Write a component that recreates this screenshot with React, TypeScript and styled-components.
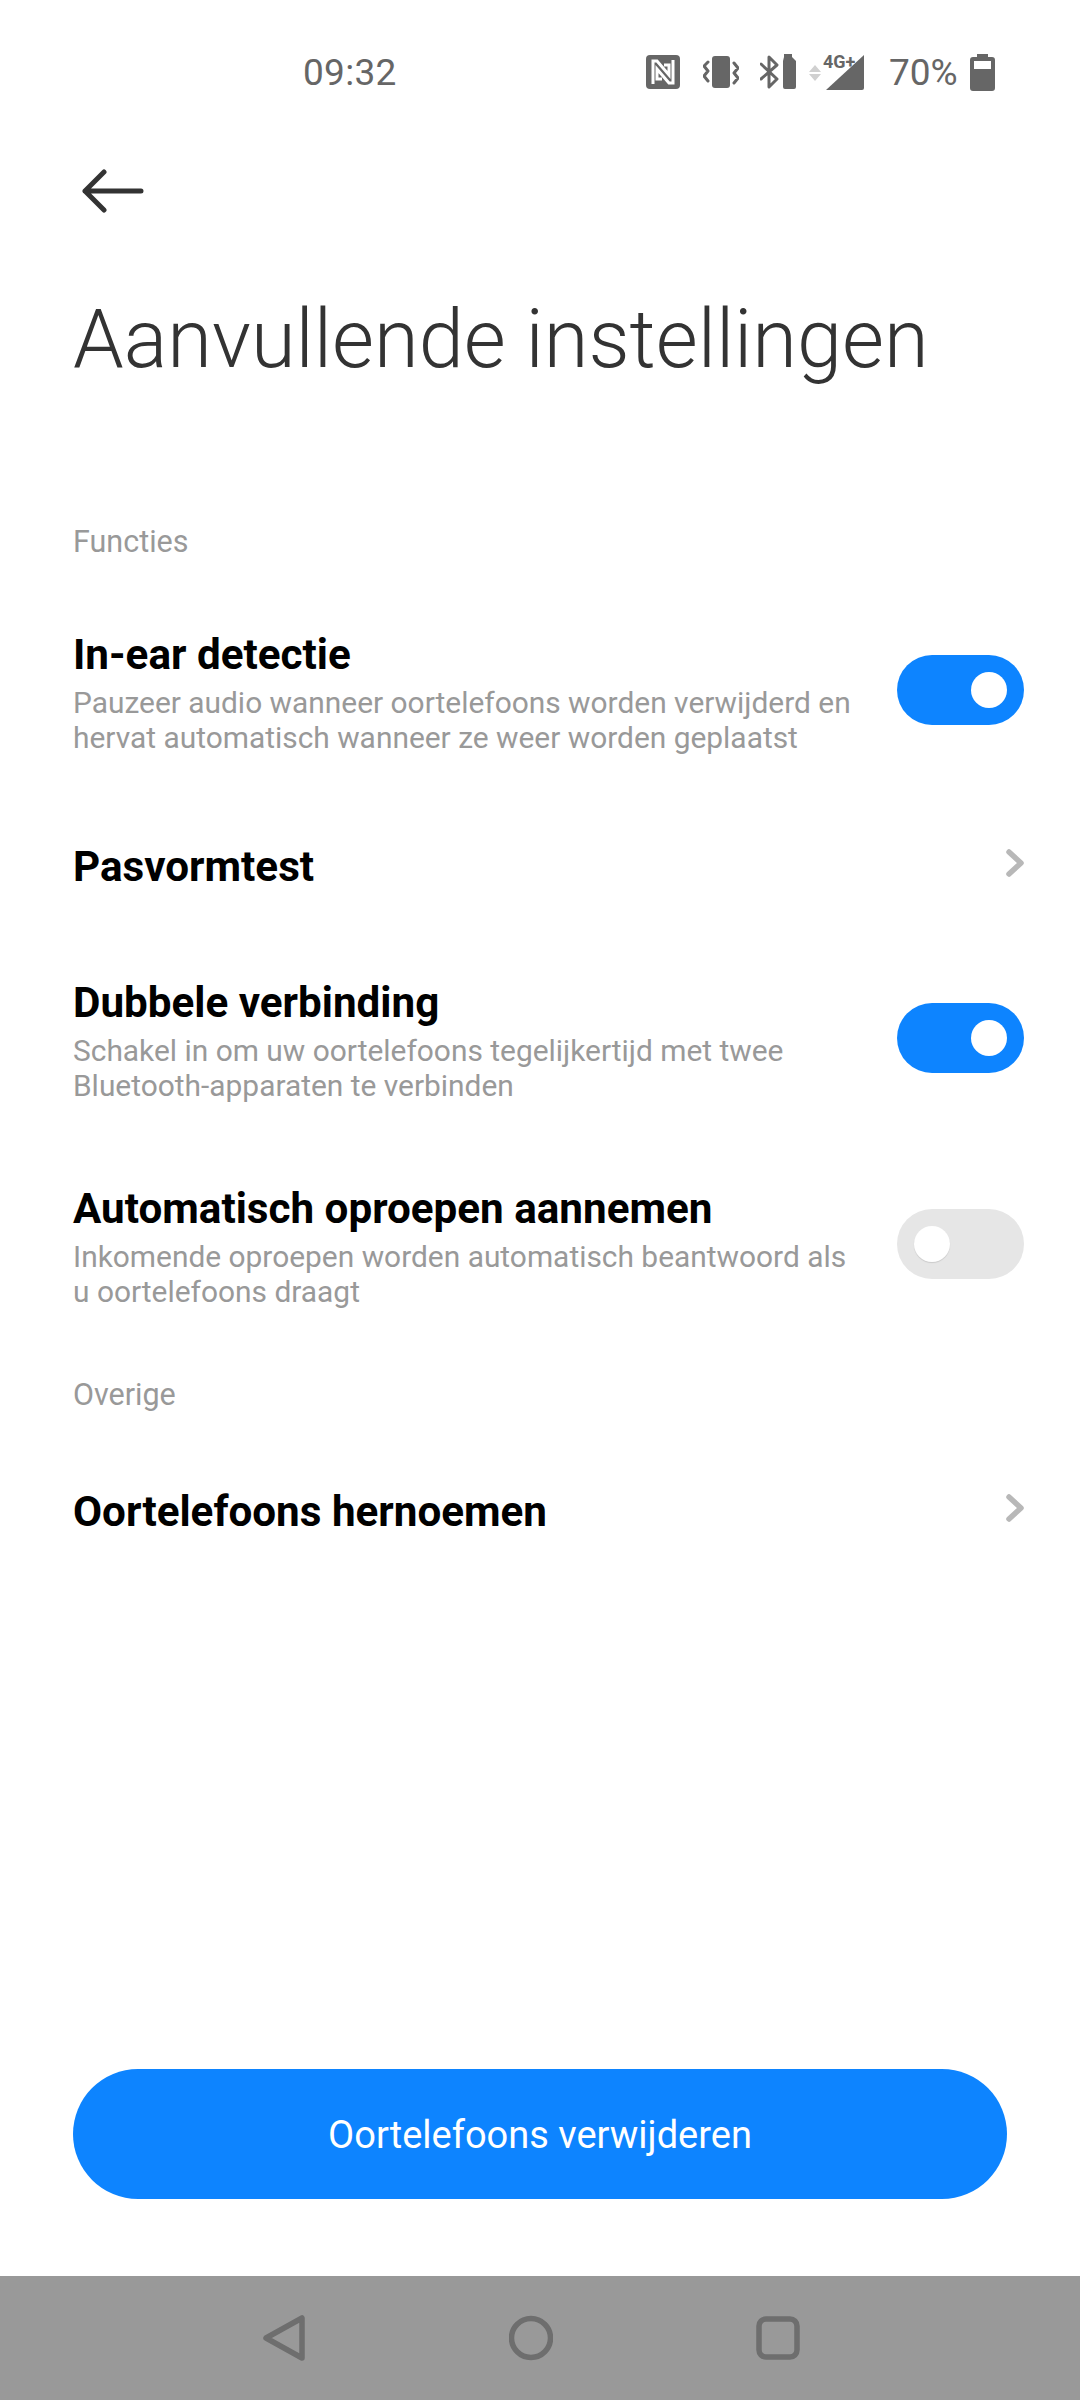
import React from "react";
import styled, { createGlobalStyle } from "styled-components";

const Global = createGlobalStyle`
  html, body { margin: 0; padding: 0; background: #fff; }
  body { font-family: Roboto, "Liberation Sans", sans-serif; }
`;

const Page = styled.div`
  width: 1080px;
  height: 2400px;
  display: flex;
  flex-direction: column;
  background: #fff;
  overflow: hidden;
`;

const StatusBar = styled.div`
  height: 144px;
  flex: none;
  display: flex;
  align-items: center;
  padding: 0 0 0 303px;
  box-sizing: border-box;
  color: #666;
  font-size: 37px;
`;

const Time = styled.span`
  width: 343px;
  letter-spacing: 0.3px;
`;

const StatusIcon = styled.svg<{ $ml?: number }>`
  display: block;
  flex: none;
  margin-left: ${(p) => p.$ml ?? 0}px;
`;

const Percent = styled.span`
  margin-left: 25px;
  font-size: 37px;
`;

const BackRow = styled.div`
  height: 64px;
  flex: none;
  margin-top: 25px;
  padding: 0 0 0 82px;
`;

const Title = styled.h1`
  margin: 57px 0 0;
  padding-left: 73px;
  font-size: 81.2px;
  line-height: 100px;
  font-weight: 300;
  color: #333;
`;

const Section = styled.div<{ $mt: number; $mb: number }>`
  margin: ${(p) => p.$mt}px 0 ${(p) => p.$mb}px 73px;
  font-size: 30.5px;
  line-height: 36px;
  color: #999;
`;

const Row = styled.div`
  display: flex;
  align-items: center;
  justify-content: space-between;
  padding: 44px 56px 38px 73px;
`;

const LinkRow = styled.div`
  display: flex;
  align-items: center;
  justify-content: space-between;
  height: 142px;
  padding: 6px 56px 0 73px;
  box-sizing: border-box;
`;

const RowText = styled.div`
  width: 800px;
`;

const RowTitle = styled.div`
  font-size: 42.2px;
  line-height: 48px;
  font-weight: 700;
  color: #000;
`;

const RowSub = styled.div`
  margin-top: 6px;
  font-size: 29.9px;
  line-height: 35px;
  color: #999;
  white-space: pre-line;
`;

const Toggle = styled.div<{ $on: boolean }>`
  width: 127px;
  height: 70px;
  flex: none;
  margin-top: -7px;
  border-radius: 35px;
  background: ${(p) => (p.$on ? "#0d84ff" : "#e6e6e6")};
  display: flex;
  align-items: center;
  justify-content: ${(p) => (p.$on ? "flex-end" : "flex-start")};
  padding: 0 17px;
  box-sizing: border-box;
`;

const Knob = styled.div<{ $shadow: boolean }>`
  width: 36px;
  height: 36px;
  border-radius: 50%;
  background: #fff;
  box-shadow: ${(p) => (p.$shadow ? "0 1px 1px rgba(0,0,0,.12)" : "none")};
`;

const Chevron = styled.svg`
  display: block;
  flex: none;
  margin-top: -8px;
`;

const Spacer = styled.div`
  flex: 1;
`;

const MainButton = styled.div`
  margin: 0 73px 77px;
  height: 130px;
  padding-top: 1px;
  box-sizing: border-box;
  border-radius: 65px;
  background: #0d84ff;
  color: #fff;
  font-size: 38px;
  display: flex;
  align-items: center;
  justify-content: center;
`;

const NavBar = styled.div`
  height: 124px;
  flex: none;
  background: #999;
  display: flex;
  align-items: center;
  padding: 0 0 0 263px;
  gap: 203px;
`;

const ChevronIcon = () => (
  <Chevron width="18" height="28" viewBox="0 0 18 28">
    <path d="M3 3 L15 14 L3 25" fill="none" stroke="#b8b8b8" strokeWidth="5.5" strokeLinecap="round" strokeLinejoin="round" />
  </Chevron>
);

const Switch = ({ on }: { on: boolean }) => (
  <Toggle $on={on}>
    <Knob $shadow={!on} />
  </Toggle>
);

const Item = ({ title, sub, on }: { title: string; sub: string; on: boolean }) => (
  <Row>
    <RowText>
      <RowTitle>{title}</RowTitle>
      <RowSub>{sub}</RowSub>
    </RowText>
    <Switch on={on} />
  </Row>
);

export default function App() {
  return (
    <Page>
      <Global />
      <StatusBar>
        <Time>09:32</Time>
        <StatusIcon width="34" height="34" viewBox="0 0 34 34">
          <rect width="34" height="34" rx="4" fill="#666" />
          <path d="M7 29 V6 H11 L23 20 V10 H18 M27 5 V28 H23 L11 14 V24 H16" fill="none" stroke="#fff" strokeWidth="3" />
        </StatusIcon>
        <StatusIcon $ml={23} width="36" height="34" viewBox="0 0 36 34">
          <rect x="9" y="1" width="18" height="32" rx="3" fill="#666" />
          <path d="M5 7 L1 11 L5 16 L1 21 L5 26 M31 8 L35 13 L31 18 L35 23 L31 28" fill="none" stroke="#666" strokeWidth="3" strokeLinejoin="round" strokeLinecap="round" />
        </StatusIcon>
        <StatusIcon $ml={21} width="36" height="36" viewBox="0 0 36 36">
          <path d="M1 10 L17 25 L9 33 V3 L17 11 L1 25" fill="none" stroke="#666" strokeWidth="3" strokeLinejoin="round" strokeLinecap="round" />
          <path d="M24 0 H32 V3 L36 7 V33 Q36 35 34 35 H25 Q23 35 23 33 V7 L24 3 Z" fill="#666" />
        </StatusIcon>
        <StatusIcon $ml={12} width="56" height="44" viewBox="0 -3 56 44">
          <path d="M1 19 L7 12 L13 19 Z M1 21 H13 L7 28 Z" fill="#d0d0d0" />
          <path d="M18 37 L56 2 V35 Q56 37 54 37 Z" fill="#666" />
          <text x="15" y="15" fontFamily="Roboto, sans-serif" fontSize="18" fontWeight="700" fill="#666">4G+</text>
        </StatusIcon>
        <Percent>70%</Percent>
        <StatusIcon $ml={12} width="25" height="37" viewBox="0 0 25 37">
          <path fillRule="evenodd" d="M7 0 H18 V3 H22 Q25 3 25 6 V34 Q25 37 22 37 H3 Q0 37 0 34 V6 Q0 3 3 3 H7 Z M4 7 V15 H21 V7 Z" fill="#666" />
        </StatusIcon>
      </StatusBar>
      <BackRow>
        <svg width="62" height="44" viewBox="0 0 62 44">
          <path d="M3 22 H59 M22 3 L3 22 L22 41" fill="none" stroke="#333" strokeWidth="5" strokeLinecap="round" strokeLinejoin="round" />
        </svg>
      </BackRow>
      <Title>Aanvullende instellingen</Title>
      <Section $mt={134} $mb={27}>Functies</Section>
      <Item
        title="In-ear detectie"
        sub={"Pauzeer audio wanneer oortelefoons worden verwijderd en\nhervat automatisch wanneer ze weer worden geplaatst"}
        on
      />
      <LinkRow>
        <RowTitle>Pasvormtest</RowTitle>
        <ChevronIcon />
      </LinkRow>
      <Item
        title="Dubbele verbinding"
        sub={"Schakel in om uw oortelefoons tegelijkertijd met twee\nBluetooth-apparaten te verbinden"}
        on
      />
      <Item
        title="Automatisch oproepen aannemen"
        sub={"Inkomende oproepen worden automatisch beantwoord als\nu oortelefoons draagt"}
        on={false}
      />
      <Section $mt={30} $mb={25}>Overige</Section>
      <LinkRow>
        <RowTitle>Oortelefoons hernoemen</RowTitle>
        <ChevronIcon />
      </LinkRow>
      <Spacer />
      <MainButton>Oortelefoons verwijderen</MainButton>
      <NavBar>
        <svg width="43" height="46" viewBox="0 0 43 46">
          <path d="M3 23 L39 3 V43 Z" fill="none" stroke="#6e6e6e" strokeWidth="5.5" strokeLinejoin="round" />
        </svg>
        <svg width="44" height="46" viewBox="0 0 44 46">
          <circle cx="22" cy="23" r="19.5" fill="none" stroke="#6e6e6e" strokeWidth="5.5" />
        </svg>
        <svg width="44" height="46" viewBox="0 0 44 46">
          <rect x="3" y="4" width="38" height="38" rx="7" fill="none" stroke="#6e6e6e" strokeWidth="5.5" />
        </svg>
      </NavBar>
    </Page>
  );
}
